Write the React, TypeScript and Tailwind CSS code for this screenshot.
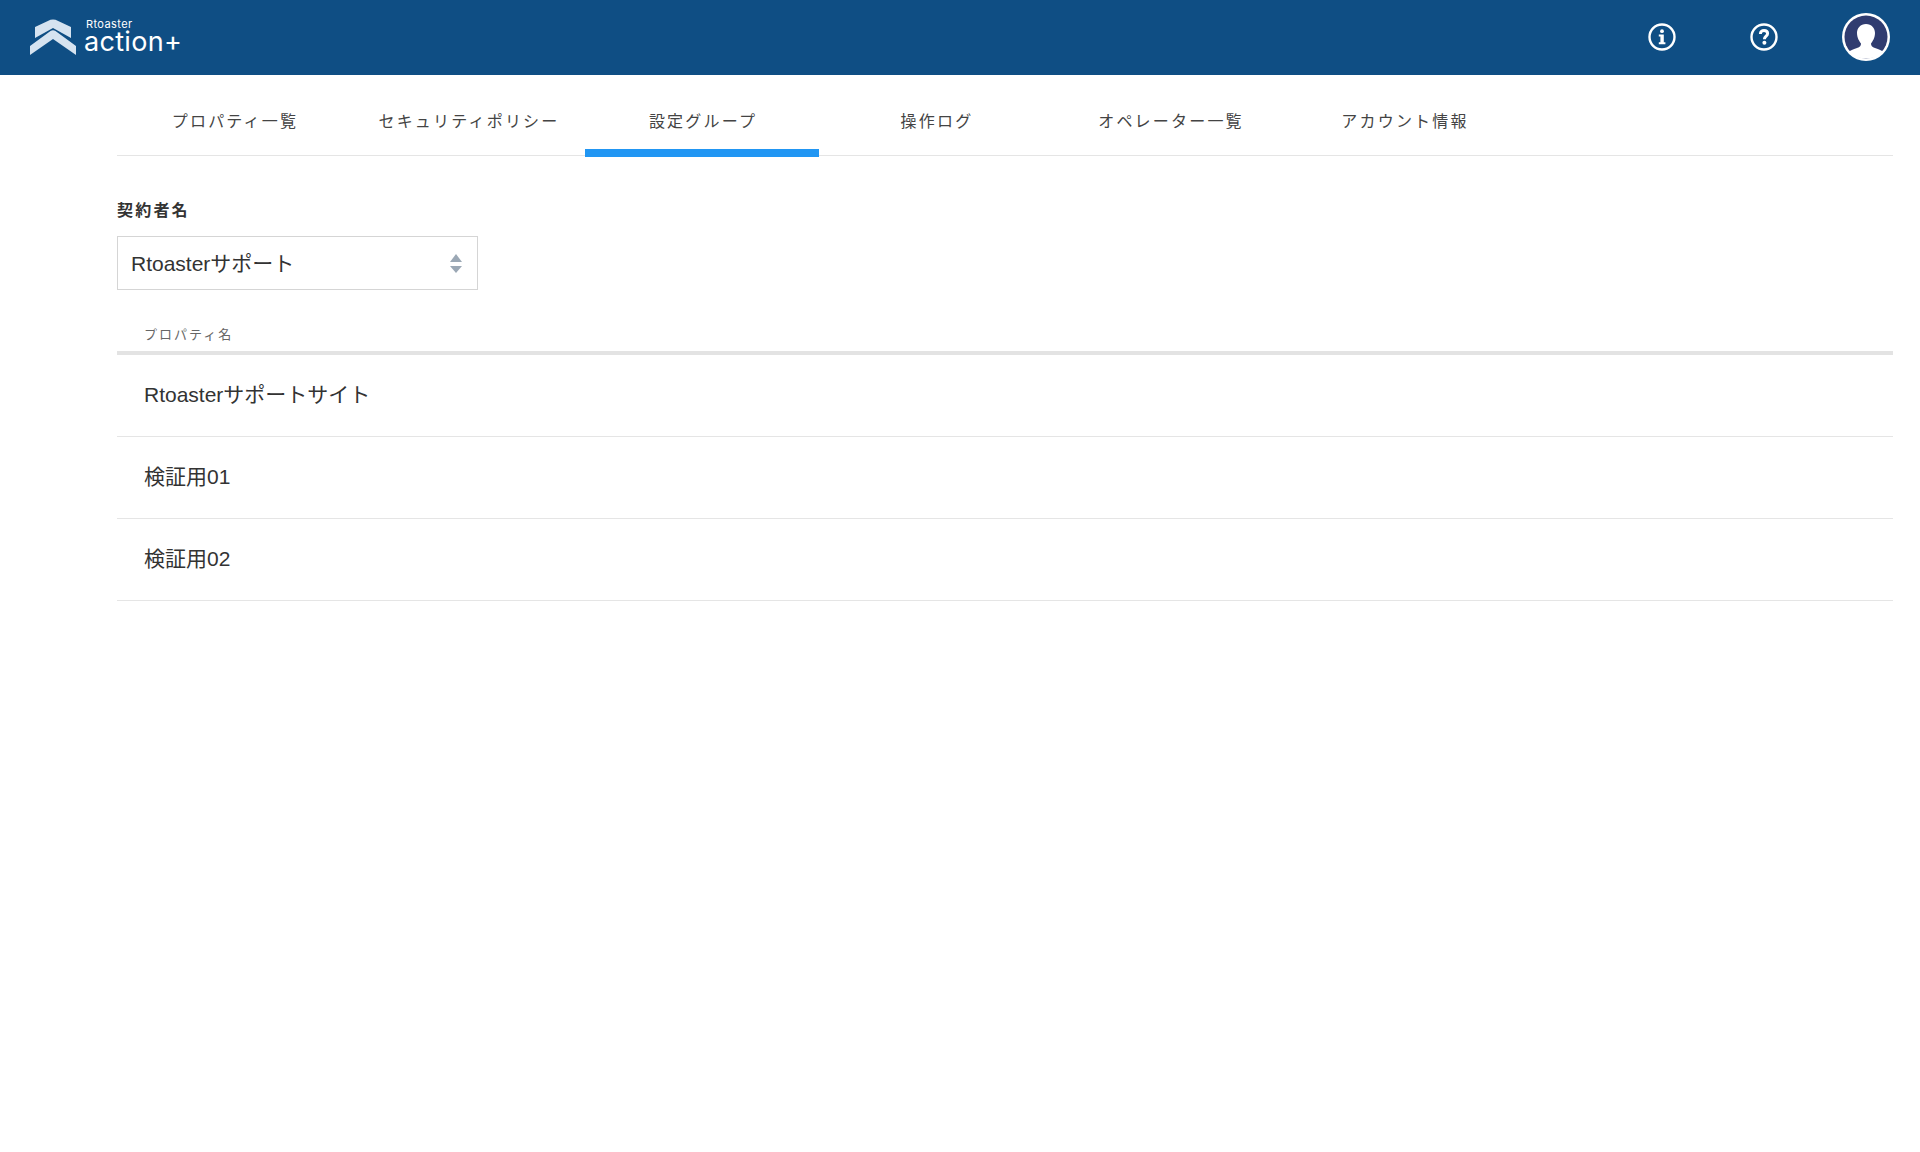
import React from 'react';

const tabs = ['プロパティ一覧', 'セキュリティポリシー', '設定グループ', '操作ログ', 'オペレーター一覧', 'アカウント情報'];
const rows = ['Rtoasterサポートサイト', '検証用01', '検証用02'];

function Logo() {
  return (
    <div className="mb-[2px] flex items-start">
      <svg width="46" height="36" viewBox="0 0 46 36" fill="#d6e3f0">
        <path d="M5 8 L20.5 0.8 Q23 0 25.5 0.8 L41 8 L41 19 L23 9 L5 19 Z" />
        <path d="M0 27 L20.5 12 Q23 10.6 25.5 12 L46 27 L46 36 L23 20 L0 36 Z" />
      </svg>
      <div className="-mt-[1px] ml-[8px] flex flex-col text-white font-['Inter',sans-serif]">
        <span className="ml-[2px] text-[11px] leading-[12px] tracking-[0.4px]">Rtoaster</span>
        <span className="h-[24px] text-[27px] leading-[24px] tracking-[0.3px]">action+</span>
      </div>
    </div>
  );
}

function InfoIcon() {
  return (
    <svg width="28" height="28" viewBox="0 0 28 28" fill="none">
      <circle cx="14" cy="14" r="12.5" stroke="white" strokeWidth="2.4" />
      <circle cx="14" cy="8.2" r="1.9" fill="white" />
      <path d="M10.8 11.5 H15.8 V19.2 H17.4 V21.2 H10.8 V19.2 H12.4 V13.5 H10.8 Z" fill="white" />
    </svg>
  );
}

function HelpIcon() {
  return (
    <svg width="28" height="28" viewBox="0 0 28 28" fill="none">
      <circle cx="14" cy="14" r="12.5" stroke="white" strokeWidth="2.4" />
      <path d="M10.4 11 C10.4 8.8 12 7.6 14 7.6 C16.2 7.6 17.6 8.9 17.6 10.6 C17.6 13.2 14.4 13.2 14.4 16.2" stroke="white" strokeWidth="3" />
      <circle cx="14.4" cy="19.8" r="2" fill="white" />
    </svg>
  );
}

function Avatar() {
  return (
    <svg width="48" height="48" viewBox="0 0 48 48">
      <circle cx="24" cy="24" r="24" fill="white" />
      <circle cx="24" cy="24" r="21.5" fill="#303c70" />
      <path d="M24 11 C29.5 11 33 15 33 20 C33 25 30.5 28.5 29 30.5 C29 33 30 34 33 35 C37 36.2 40 37.5 41.5 39 C37 43.5 31 45.5 24 45.5 C17 45.5 11 43.5 6.5 39 C8 37.5 11 36.2 15 35 C18 34 19 33 19 30.5 C17.5 28.5 15 25 15 20 C15 15 18.5 11 24 11 Z" fill="white" />
    </svg>
  );
}

function SortArrows() {
  return (
    <svg width="12" height="19" viewBox="0 0 12 19" fill="#9ba8b5">
      <path d="M6 0 L12 8 H0 Z" />
      <path d="M0 12 H12 L6 19 Z" />
    </svg>
  );
}

export default function App() {
  return (
    <div className="min-h-screen bg-white text-[#333] font-['Liberation_Sans','Noto_Sans_CJK_JP',sans-serif]">
      <header className="flex h-[75px] items-center justify-between bg-[#0f4e84] pl-[30px] pr-[3px]">
        <Logo />
        <div className="flex items-center pb-[1px]">
          <div className="flex w-[102px] justify-center"><InfoIcon /></div>
          <div className="flex w-[102px] justify-center"><HelpIcon /></div>
          <div className="flex w-[102px] justify-center"><Avatar /></div>
        </div>
      </header>

      <main className="ml-[117px] mr-[27px]">
        <nav className="flex h-[81px] border-b border-[#e5e5e5]">
          {tabs.map((tab, i) => (
            <div
              key={tab}
              className={`h-[82px] w-[234px] pl-[2px] pt-[35px] text-center text-[16px] leading-[24px] tracking-[2.2px] text-[#444] ${i === 2 ? 'border-b-[8px] border-[#2196f3]' : ''}`}
            >
              {tab}
            </div>
          ))}
        </nav>

        <div className="mt-[44px] text-[16px] font-bold leading-[22px] tracking-[2.2px]">契約者名</div>
        <div className="mt-[14px] flex h-[54px] w-[361px] items-center justify-between border border-[#d5d5d5] pl-[13px] pr-[15px] text-[21px]">
          <span className="pt-[1px]">Rtoasterサポート</span>
          <SortArrows />
        </div>

        <div className="mt-[36px] border-b-[4px] border-[#e3e3e3] pb-[7px] pl-[27px] text-[13px] leading-[18px] tracking-[2px] text-[#666]">
          プロパティ名
        </div>
        {rows.map(row => (
          <div key={row} className="flex h-[82px] items-center border-b border-[#e5e5e5] pb-[2px] pl-[27px] text-[21px]">
            {row}
          </div>
        ))}
      </main>
    </div>
  );
}
